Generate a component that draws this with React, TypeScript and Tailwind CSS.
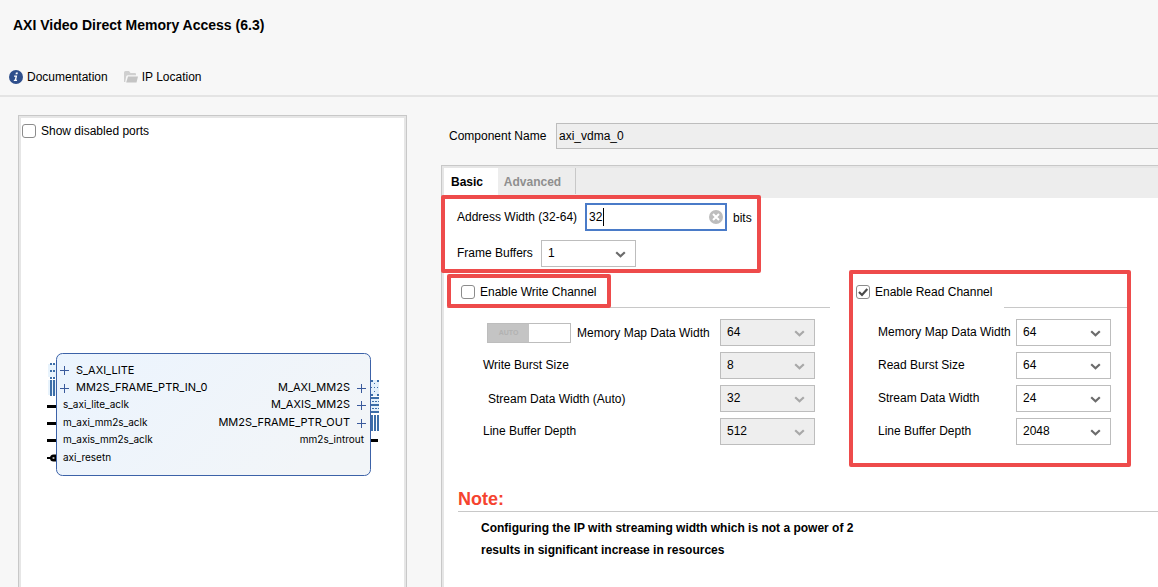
import React from "react";

function Chevron({ disabled }: { disabled?: boolean }) {
  return (
    <svg
      className={`pointer-events-none absolute top-1/2 right-2.5 -mt-[5px] h-[10px] w-[11px] ${disabled ? "text-[#a8a8a8]" : "text-[#6b6b6b]"}`}
      viewBox="0 0 11 10"
      aria-hidden="true"
    >
      <path d="M1.2 3.2 L5.5 7.2 L9.8 3.2" fill="none" stroke="currentColor" strokeWidth="2.2" />
    </svg>
  );
}

function Dropdown({ id, value, disabled }: { id: string; value: string; disabled?: boolean }) {
  return (
    <div className="relative h-[27px] w-[95px]">
      <select
        id={id}
        defaultValue={value}
        disabled={disabled}
        className={`h-full w-full appearance-none border border-[#bdbdbd] pb-0.5 pl-1.5 text-black opacity-100 outline-none ${disabled ? "bg-[#eeeeee]" : "bg-white"}`}
      >
        <option>{value}</option>
      </select>
      <Chevron disabled={disabled} />
    </div>
  );
}

function Check({ id, label, checked }: { id: string; label: string; checked?: boolean }) {
  return (
    <label htmlFor={id} className="flex items-center gap-[5px] whitespace-nowrap">
      <span className="relative size-[14px]">
        <input
          id={id}
          type="checkbox"
          defaultChecked={checked}
          className="peer block size-[14px] appearance-none rounded-[3px] border border-[#8c8c8c] bg-white"
        />
        <svg viewBox="0 0 14 14" className="pointer-events-none absolute inset-0 hidden peer-checked:block" aria-hidden="true">
          <path d="M3 7 L6 10 L11.3 4" fill="none" stroke="#4a4a4a" strokeWidth="2.2" />
        </svg>
      </span>
      {label}
    </label>
  );
}

function Highlight({ className }: { className: string }) {
  return <div className={`pointer-events-none absolute rounded-[2px] border-4 border-[#ee4b4b] ${className}`} />;
}

function Plus({ x, y }: { x: number; y: number }) {
  return <path d={`M${x - 4.5} ${y}h9M${x} ${y - 4.5}v9`} stroke="#3a5a9c" fill="none" />;
}

function BlockDiagram() {
  return (
    <svg viewBox="46 352 336 125" className="h-[125px] w-[336px]" fontFamily="Inter, sans-serif" fontSize="10" role="img" aria-label="IP symbol">
      <defs>
        <linearGradient id="blockFill" x1="0" y1="0" x2="1" y2="0.4">
          <stop offset="0" stopColor="#ebf4fe" />
          <stop offset="1" stopColor="#f2f5f8" />
        </linearGradient>
      </defs>
      <g>
        <path d="M48 364h8v13h-8zM48 380h8v15h-8z" fill="#e8f3fc" />
        <path d="M50 363h2v2h-2zM53 363h2v2h-2zM50 370h2v2h-2zM53 370h2v2h-2zM50 377h2v2h-2zM53 377h2v2h-2zM50 380h2v16h-2zM53 380h2v16h-2z" fill="#3d6ea8" />
      </g>
      <g>
        <path d="M371 380h8v16h-8zM371 397h8v16h-8z" fill="#e4f0fb" />
        <path d="M371 380h2v2h-2zM377 380h2v2h-2zM374 383h1v1h-1zM371 387h1v1h-1zM374 387h1v1h-1zM377 387h1v1h-1zM374 391h1v1h-1zM371 394h2v2h-2zM377 394h2v2h-2z" fill="#3d6ea8" />
        <path d="M371 397h8v2h-8zM371 404h8v2h-8zM371 411h8v2h-8z" fill="#3d6ea8" />
        <path d="M372 401.5h7M372 408.500h7" stroke="#3d6ea8" strokeDasharray="2 1" />
        <path d="M371 415h2v16h-2zM374 415h2v16h-2zM377 415h2v16h-2z" fill="#3d6ea8" />
      </g>
      <rect x="56.5" y="353.5" width="314" height="122" rx="6" fill="url(#blockFill)" stroke="#3c62a8" />
      <path d="M47 405h9v3h-9zM47 422h9v3h-9zM47 439h9v3h-9zM371 439h7v3h-7zM47 457h4v2h-4z" fill="#000" />
      <path d="M56 454.500h-2.500a3.500 3.500 0 0 0 0 7H56z" fill="#000" />
      <circle cx="53.500" cy="458" r="1.100" fill="#bbb" />
      <Plus x={64.5} y={370.5} />
      <Plus x={64.5} y={388.5} />
      <Plus x={361.5} y={388.5} />
      <Plus x={361.5} y={405.5} />
      <Plus x={361.5} y={423.5} />
      <g fontSize="11">
        <text x="76" y="374">S_AXI_LITE</text>
        <text x="76" y="391">MM2S_FRAME_PTR_IN_0</text>
      </g>
      <text x="63" y="408">s_axi_lite_aclk</text>
      <text x="63" y="426">m_axi_mm2s_aclk</text>
      <text x="63" y="443">m_axis_mm2s_aclk</text>
      <text x="63" y="461">axi_resetn</text>
      <g textAnchor="end">
        <g fontSize="11">
          <text x="350" y="391">M_AXI_MM2S</text>
          <text x="350" y="408">M_AXIS_MM2S</text>
          <text x="350" y="426">MM2S_FRAME_PTR_OUT</text>
        </g>
        <text x="364" y="443">mm2s_introut</text>
      </g>
    </svg>
  );
}

const readFields = [
  { id: "r-mm", label: "Memory Map Data Width", value: "64" },
  { id: "r-burst", label: "Read Burst Size", value: "64" },
  { id: "r-stream", label: "Stream Data Width", value: "24" },
  { id: "r-line", label: "Line Buffer Depth", value: "2048" },
];

export default function App() {
  return (
    <div className="flex min-h-screen flex-col overflow-x-hidden bg-[#f7f7f7] font-['Liberation_Sans',Arial,sans-serif] text-[12px] leading-4 text-black">
      <header className="flex flex-col gap-8 border-b-2 border-[#e4e4e4] px-[9px] pt-4 pb-[10px]">
        <h1 className="pb-0.5 pl-1 text-[14px] leading-[18px] font-bold">AXI Video Direct Memory Access (6.3)</h1>
        <nav className="flex h-[17px] items-center gap-4">
          <a href="#documentation" className="flex items-center gap-1">
            <svg viewBox="0 0 14 14" className="size-[14px]" aria-hidden="true">
              <circle cx="7" cy="7" r="7" fill="#2f4f8c" />
              <path d="M6.9 2.5h2l-.4 1.8h-2zM5.2 5.5h3l-1 4.3h1l-.3 1.2H4.7L5 9.8h.8l.7-3.1H5z" fill="#fff" />
            </svg>
            Documentation
          </a>
          <a href="#location" className="flex items-center gap-1">
            <svg viewBox="0 0 14 12" className="h-3 w-[14px]" aria-hidden="true">
              <path d="M0 11V1.5Q0 0 1.5 0H5l1.5 2H11q1 0 1 1v1.200H4Q2.500 4.200 2.200 5.500L1.200 11z" fill="#d0d0d0" />
              <path d="M4 5.500H14L12.500 11.500H2.200z" fill="#c4c4c4" />
            </svg>
            IP Location
          </a>
        </nav>
      </header>

      <main className="flex flex-1 gap-[34px] pt-[18px] pl-[18px]">
        <section className="flex w-[389px] shrink-0 flex-col border-x border-t border-[#c8c8c8]">
          <div className="flex flex-1 flex-col border-x-2 border-t-2 border-[#e6e6e6] bg-white">
            <div className="flex h-[26px] items-center pl-px">
              <Check id="ports" label="Show disabled ports" />
            </div>
            <div className="mt-[208px] ml-[25px]">
              <BlockDiagram />
            </div>
          </div>
        </section>

        <section className="flex min-w-0 flex-1 flex-col pt-2">
          <div className="flex items-center pl-2">
            <label htmlFor="component" className="w-[107px] whitespace-nowrap">Component Name</label>
            <input
              id="component"
              readOnly
              defaultValue="axi_vdma_0"
              className="h-[26px] min-w-0 flex-1 border border-r-0 border-[#bdbdbd] bg-[#eeeeee] px-[2px] outline-none"
            />
          </div>

          <div className="mt-4 flex flex-1 flex-col border-t border-l border-[#c8c8c8]">
            <div className="flex-1 border-t-2 border-l-2 border-[#e6e6e6] bg-white">
              <div role="tablist" className="flex h-[30px] bg-[#ededed] font-bold">
                <button role="tab" aria-selected="true" className="w-[54px] bg-white pr-2 pb-0.5 text-center">Basic</button>
                <button role="tab" aria-selected="false" className="mb-1 w-[78px] border-r border-[#c8c8c8] pt-0.5 pr-2 text-center text-[#8f8f8f]">Advanced</button>
              </div>

              <div className="relative flex h-[75px] w-[317px] flex-col gap-[9px] pt-[5px] pl-[13px]">
                <div className="flex items-center">
                  <label htmlFor="address" className="w-32 whitespace-nowrap">Address Width (32-64)</label>
                  <div className="relative">
                    <input
                      id="address"
                      defaultValue="32"
                      className="block h-7 w-[142px] border-2 border-[#4a7bc8] bg-white px-[2px] outline-none"
                    />
                    <span className="absolute top-[5px] left-[18px] h-[18px] w-px bg-black" />
                    <button aria-label="Clear" className="absolute top-[7px] right-1">
                      <svg viewBox="0 0 14 14" className="size-[14px]" aria-hidden="true">
                        <circle cx="7" cy="7" r="7" fill="#bdbdbd" />
                        <path d="M4 4l6 6M10 4l-6 6" stroke="#fff" strokeWidth="2" />
                      </svg>
                    </button>
                  </div>
                  <span className="pt-0.5 pl-1.5">bits</span>
                </div>
                <div className="flex items-center">
                  <label htmlFor="frames" className="w-[84px] pb-0.5 whitespace-nowrap">Frame Buffers</label>
                  <Dropdown id="frames" value="1" />
                </div>
                <Highlight className="-top-[3px] right-0 bottom-0 -left-[3px]" />
              </div>

              <div className="flex gap-[19px] pl-[3px]">
                <section className="w-[383px] shrink-0">
                  <div className="flex h-[35px] border-b border-[#c8c8c8]">
                    <div className="relative flex w-[164px] items-center pt-[3px] pl-[14px]">
                      <Check id="write" label="Enable Write Channel" />
                      <Highlight className="top-px right-0 -bottom-px left-0" />
                    </div>
                  </div>
                  <div className="grid grid-cols-[237px_95px] items-center gap-y-1.5 pt-[11px] pl-9">
                    <div className="flex items-center gap-1.5 pl-1">
                      <button role="switch" aria-checked="true" aria-label="Automatic width" disabled className="flex h-5 w-[84px] border border-[#bdbdbd] bg-white">
                        <span className="flex h-full w-[41px] items-center justify-center bg-[#c4c4c4] text-[7px] font-bold text-[#b2b2b2]">AUTO</span>
                      </button>
                      <label htmlFor="w-mm" className="whitespace-nowrap">Memory Map Data Width</label>
                    </div>
                    <Dropdown id="w-mm" value="64" disabled />
                    <label htmlFor="w-burst" className="pb-0.5">Write Burst Size</label>
                    <Dropdown id="w-burst" value="8" disabled />
                    <label htmlFor="w-stream" className="pl-[5px]">Stream Data Width (Auto)</label>
                    <Dropdown id="w-stream" value="32" disabled />
                    <label htmlFor="w-line" className="pb-0.5">Line Buffer Depth</label>
                    <Dropdown id="w-line" value="512" disabled />
                  </div>
                </section>

                <section className="relative h-[194px] w-[282px] shrink-0">
                  <div className="flex h-[35px] gap-2 pr-1 pl-[7px]">
                    <div className="flex w-[140px] items-center pt-[3px]">
                      <Check id="read" label="Enable Read Channel" checked />
                    </div>
                    <div className="flex-1 border-b border-[#c8c8c8]" />
                  </div>
                  <div className="grid grid-cols-[138px_95px] items-center gap-y-1.5 pt-[11px] pl-[29px]">
                    {readFields.map((f) => (
                      <React.Fragment key={f.id}>
                        <label htmlFor={f.id} className="pb-0.5 whitespace-nowrap">{f.label}</label>
                        <Dropdown id={f.id} value={f.value} />
                      </React.Fragment>
                    ))}
                  </div>
                  <Highlight className="-top-[3px] right-0 bottom-0 left-0" />
                </section>
              </div>

              <div className="pt-5 pl-[14px]">
                <h2 className="border-b border-[#c8c8c8] text-[18px] leading-6 font-bold text-[#f5432f]">Note:</h2>
                <p className="pt-[5px] pl-[23px] leading-[22px] font-bold">
                  Configuring the IP with streaming width which is not a power of 2
                  <br />
                  results in significant increase in resources
                </p>
              </div>
            </div>
          </div>
        </section>
      </main>
    </div>
  );
}
